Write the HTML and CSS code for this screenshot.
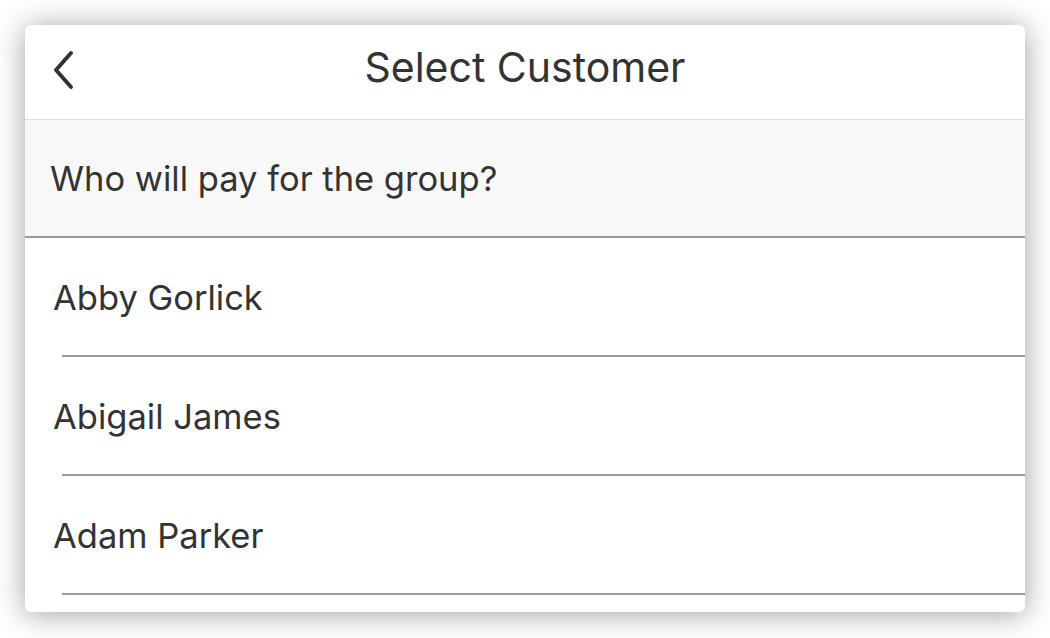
FILE: index.html
```html
<!DOCTYPE html>
<html>
<head>
<meta charset="utf-8">
<link rel="stylesheet" href="styles.css">
</head>
<body>
<div class="card">
  <header class="topbar">
    <svg class="back" width="24" height="40" viewBox="0 0 24 40"><path d="M20 3 L5 20 L20 37" fill="none" stroke="#333" stroke-width="4" stroke-linecap="round" stroke-linejoin="round"/></svg>
    <h1 class="title">Select Customer</h1>
  </header>
  <div class="prompt">Who will pay for the group?</div>
  <ul class="list">
    <li class="row"><span class="name">Abby Gorlick</span></li>
    <li class="row"><span class="name">Abigail James</span></li>
    <li class="row"><span class="name">Adam Parker</span></li>
  </ul>
</div>
</body>
</html>
```
FILE: styles.css
```css
html, body { margin: 0; padding: 0; background: #fff; }
body {
  width: 1050px; height: 638px; box-sizing: border-box;
  padding: 25px 25px 0 25px; overflow: hidden;
  font-family: Inter, Roboto, sans-serif; color: #333;
}
.card {
  width: 1000px; height: 587px; background: #fff;
  border-radius: 6px; overflow: hidden;
  box-shadow: 0 2px 30px rgba(0,0,0,0.38);
  display: flex; flex-direction: column;
}
.topbar {
  height: 94px; flex: none; position: relative;
  display: flex; align-items: center; justify-content: center;
  border-bottom: 1px solid #ddd;
}
.back { position: absolute; left: 26px; top: 25px; }
.title { margin: 0 0 10px 0; font-size: 41px; font-weight: 400; }
.prompt {
  height: 118px; flex: none; box-sizing: border-box; background: #f8f8f8;
  border-bottom: 2px solid #9a9a9a;
  display: flex; align-items: center; padding-left: 25px;
  font-size: 34.5px;
}
.list { list-style: none; margin: 0; padding: 0 0 0 37px; }
.row {
  height: 117px; border-bottom: 2px solid #9a9a9a;
  display: flex; align-items: center;
}
.name { font-size: 34.5px; margin-left: -9px; margin-top: 2px; }
```
